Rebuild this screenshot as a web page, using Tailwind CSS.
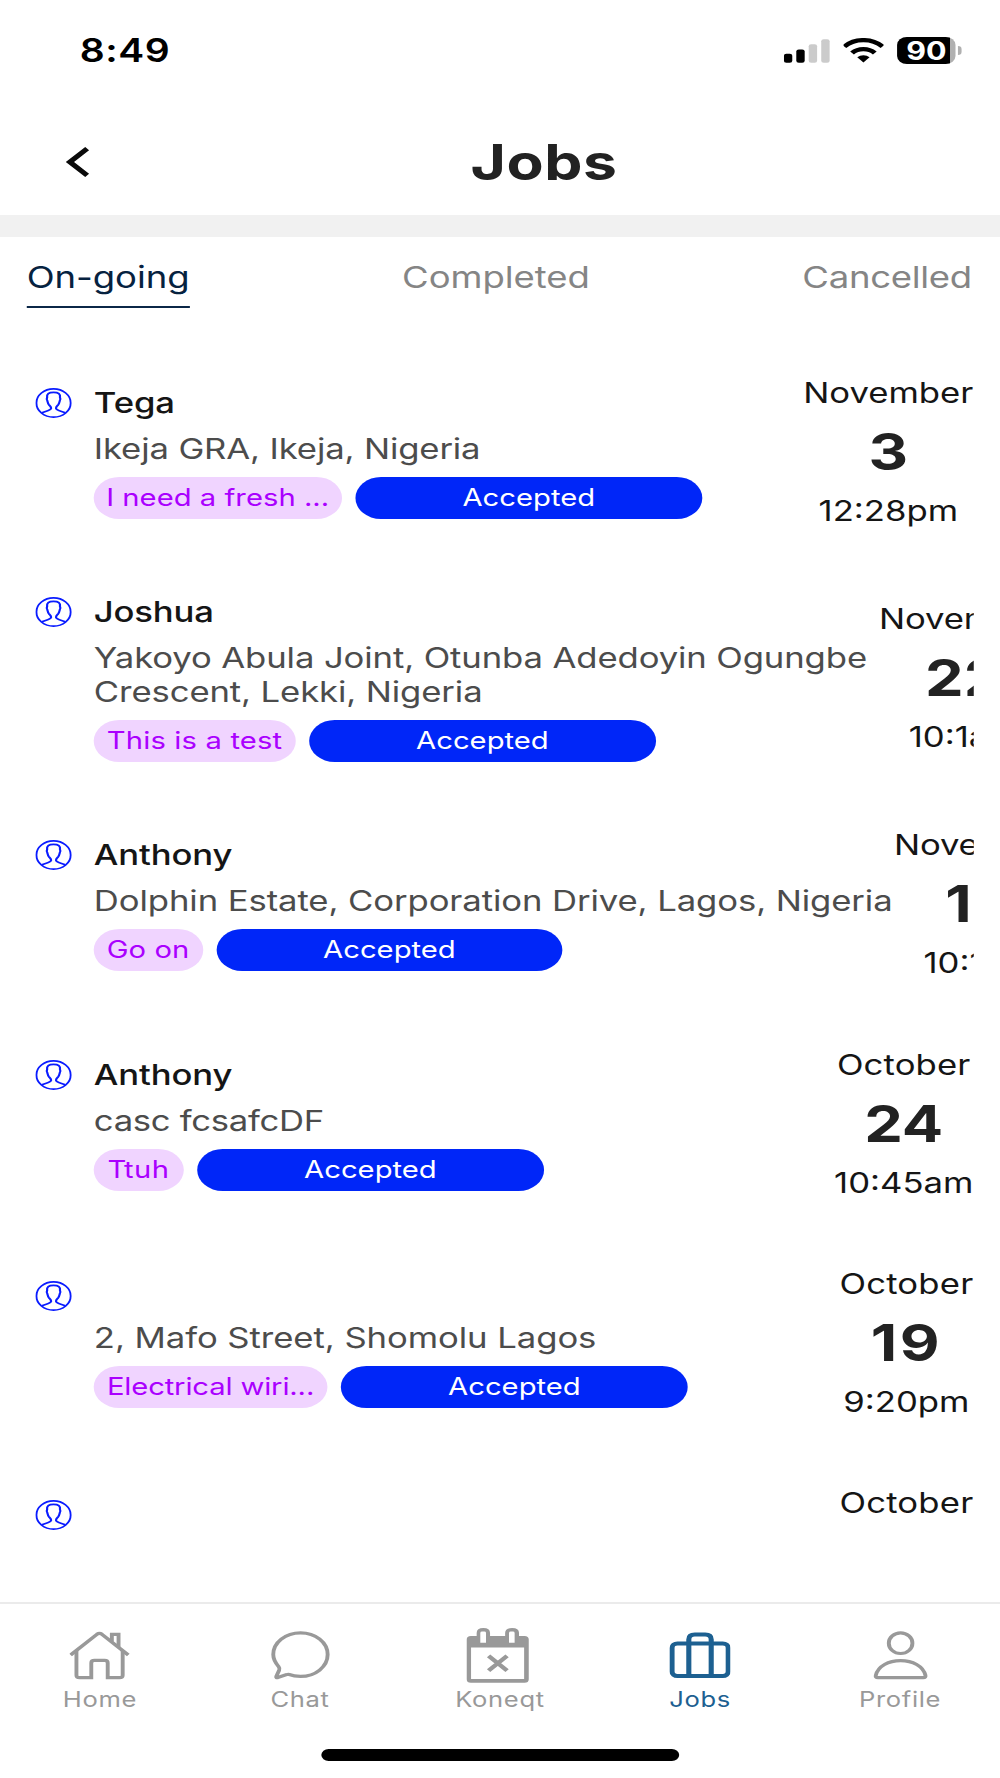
<!DOCTYPE html>
<html lang="en">
<head>
<meta charset="utf-8">
<meta name="viewport" content="width=device-width, initial-scale=1">
<title>Jobs</title>
<script src="https://cdn.jsdelivr.net/npm/@tailwindcss/browser@4"></script>
</head>
<body class="bg-white overflow-hidden font-['Inter',sans-serif]">
<svg class="hidden" aria-hidden="true">
  <symbol id="avatar" viewBox="0 0 30 30">
    <g fill="none" stroke="#0a1cff" stroke-width="1.6">
      <circle cx="15" cy="15" r="14.1"/>
      <path stroke-width="1.8" d="M5.4 24.9C8.6 23.2 13 22.2 13 20.2C13 18.6 12.2 18 11.2 16.8C10.4 15.7 10.2 14.4 9.9 12.8C9.2 11.6 9.2 10.6 9.7 9.6C9.2 5.8 11 4.3 15 4.3C19 4.3 20.8 5.8 20.3 9.6C20.8 10.6 20.8 11.6 20.1 12.8C19.8 14.4 19.6 15.7 18.8 16.8C17.8 18 17 18.6 17 20.2C17 22.2 21.4 23.2 24.6 24.9"/>
    </g>
  </symbol>
</svg>

<!-- The screen is 821.5 units wide and stretched to the window's 1000px -->
<div class="w-[821.6px] h-[1778px] flex flex-col origin-top-left scale-x-[1.2172] bg-white overflow-hidden">

  <!-- Status bar -->
  <div class="h-[101px] shrink-0 flex items-center justify-between pl-[65.5px] pr-[31.2px] text-black">
    <div class="text-[32px] font-semibold tracking-[0.5px] leading-10">8:49</div>
    <div class="flex items-center">
      <svg class="w-[38px] h-6" viewBox="0 0 38 24">
        <rect x="0" y="14.8" width="6.9" height="8.9" rx="2"/>
        <rect x="10.2" y="10.5" width="6.9" height="13.2" rx="2"/>
        <rect x="20.4" y="5.2" width="6.9" height="18.5" rx="2" fill="#cbcbcb"/>
        <rect x="30.7" y="0.3" width="6.9" height="23.4" rx="2" fill="#cbcbcb"/>
      </svg>
      <svg class="w-[33px] h-[25px] ml-[11px]" viewBox="0 0 33 25">
        <g fill="none" stroke="#000" stroke-width="4.3">
          <path d="M.7 8.6A22.15 22.15 0 0 1 32 8.6"/>
          <path d="M7 15A13.15 13.15 0 0 1 25.7 15"/>
        </g>
        <path d="M16.35 24.5L11.3 19.3A7.3 7.3 0 0 1 21.4 19.3Z"/>
      </svg>
      <div class="ml-[11px] flex items-center">
        <div class="w-[48.5px] h-[26.5px] rounded-[8px] bg-[linear-gradient(to_right,#000_43.2px,#b0b0b0_43.2px)] text-center text-white text-[25px] font-bold leading-[28px]">90</div>
        <div class="ml-[2px] w-[3px] h-[9px] rounded-r-full bg-[#b0b0b0]"></div>
      </div>
    </div>
  </div>

  <!-- Header -->
  <div class="h-[114px] shrink-0 pt-2 pl-[54px] flex items-center">
    <svg class="w-[20px] h-8" viewBox="0 0 20 32" fill="none" stroke="#0a0a0a" stroke-width="4.6">
      <path d="M17.6 2.6L3.4 16L17.6 29.4"/>
    </svg>
    <h1 class="ml-[312.5px] text-[49.8px] leading-[60px] font-bold tracking-[0.5px] text-[#222]">Jobs</h1>
  </div>
  <div class="h-[22px] shrink-0 bg-[#f1f1f1]"></div>

  <!-- Tabs -->
  <div class="ml-[21.9px] mr-[23.2px] pt-[22px] shrink-0 flex justify-between text-[30px] leading-9 tracking-[-0.05px] text-[#858585]">
    <div class="pb-[11px] border-b-[2.5px] border-[#0b2747] tracking-[-0.05px] text-[#06223f]">On-going</div>
    <div>Completed</div>
    <div class="tracking-[-0.25px]">Cancelled</div>
  </div>

  <!-- Job list -->
  <div class="mx-[21.9px] h-[1250px] shrink-0 pt-[66.8px] overflow-hidden flex flex-col gap-[65.25px] text-[28.5px] leading-9 text-[#151515]">

    <div class="flex items-center shrink-0">
      <div class="flex gap-[17.7px]">
        <svg class="w-[30px] h-[30px] ml-[7px] mt-[3px] shrink-0"><use href="#avatar"/></svg>
        <div>
          <div class="pl-[0.5px] font-medium tracking-[-0.1px]">Tega</div>
          <div class="mt-[11px] pl-[0.5px] leading-[34px] tracking-[-0.12px] text-[#4c4c4c]">Ikeja GRA, Ikeja, Nigeria</div>
          <div class="mt-[11px] flex gap-[11px] text-[24px] leading-[42px] text-center whitespace-nowrap">
            <div class="w-[204.6px] rounded-full bg-[#f0d4ff] tracking-[0.02px] text-[#aa00ff]">I need a fresh ...</div>
            <div class="w-[284.5px] rounded-full bg-[#0026f8] text-white">Accepted</div>
          </div>
        </div>
      </div>
      <div class="ml-auto text-center">
        <div>November</div>
        <div class="text-[50.4px] leading-[82px] font-bold text-[#222]">3</div>
        <div>12:28pm</div>
      </div>
    </div>

    <div class="flex items-center shrink-0">
      <div class="flex gap-[17.7px] shrink-0">
        <svg class="w-[30px] h-[30px] ml-[7px] mt-[3px] shrink-0"><use href="#avatar"/></svg>
        <div class="w-[645.6px]">
          <div class="pl-[0.5px] font-medium tracking-[-0.15px]">Joshua</div>
          <div class="mt-[11px] pl-[0.5px] leading-[34px] tracking-[-0.1px] text-[#4c4c4c] whitespace-nowrap">Yakoyo Abula Joint, Otunba Adedoyin Ogungbe<br>Crescent, Lekki, Nigeria</div>
          <div class="mt-[11px] flex gap-[11px] text-[24px] leading-[42px] text-center whitespace-nowrap">
            <div class="w-[166.5px] rounded-full bg-[#f0d4ff] tracking-[0.12px] text-[#aa00ff]">This is a test</div>
            <div class="w-[284.5px] rounded-full bg-[#0026f8] text-white">Accepted</div>
          </div>
        </div>
      </div>
      <div class="text-center">
        <div class="tracking-[-0.1px]">November</div>
        <div class="text-[50.4px] leading-[82px] font-bold text-[#222]">22</div>
        <div>10:1am</div>
      </div>
    </div>

    <div class="flex items-center shrink-0">
      <div class="flex gap-[17.7px] shrink-0">
        <svg class="w-[30px] h-[30px] ml-[7px] mt-[3px] shrink-0"><use href="#avatar"/></svg>
        <div class="w-[657.8px]">
          <div class="pl-[0.5px] font-medium tracking-[-0.1px]">Anthony</div>
          <div class="mt-[11px] pl-[0.5px] leading-[34px] tracking-[-0.08px] text-[#4c4c4c] whitespace-nowrap">Dolphin Estate, Corporation Drive, Lagos, Nigeria</div>
          <div class="mt-[11px] flex gap-[11px] text-[24px] leading-[42px] text-center whitespace-nowrap">
            <div class="w-[90.1px] rounded-full bg-[#f0d4ff] tracking-[0.05px] text-[#aa00ff]">Go on</div>
            <div class="w-[284.5px] rounded-full bg-[#0026f8] text-white">Accepted</div>
          </div>
        </div>
      </div>
      <div class="text-center">
        <div class="tracking-[-0.1px]">November</div>
        <div class="text-[50.4px] leading-[82px] font-bold text-[#222]">19</div>
        <div>10:1am</div>
      </div>
    </div>

    <div class="flex items-center shrink-0">
      <div class="flex gap-[17.7px]">
        <svg class="w-[30px] h-[30px] ml-[7px] mt-[3px] shrink-0"><use href="#avatar"/></svg>
        <div>
          <div class="pl-[0.5px] font-medium tracking-[-0.1px]">Anthony</div>
          <div class="mt-[11px] pl-[0.5px] leading-[34px] tracking-[-0.25px] text-[#4c4c4c]">casc fcsafcDF</div>
          <div class="mt-[11px] flex gap-[11px] text-[24px] leading-[42px] text-center whitespace-nowrap">
            <div class="w-[74.5px] rounded-full bg-[#f0d4ff] tracking-[0.4px] text-[#aa00ff]">Ttuh</div>
            <div class="w-[284.5px] rounded-full bg-[#0026f8] text-white">Accepted</div>
          </div>
        </div>
      </div>
      <div class="ml-auto text-center">
        <div class="tracking-[0.1px]">October</div>
        <div class="text-[50.4px] leading-[82px] font-bold text-[#222]">24</div>
        <div>10:45am</div>
      </div>
    </div>

    <div class="flex items-center shrink-0">
      <div class="flex gap-[17.7px]">
        <svg class="w-[30px] h-[30px] ml-[7px] mt-[3px] shrink-0"><use href="#avatar"/></svg>
        <div>
          <div class="h-[31.5px]"></div>
          <div class="mt-[11px] pl-[0.5px] leading-[34px] tracking-[-0.06px] text-[#4c4c4c]">2, Mafo Street, Shomolu Lagos</div>
          <div class="mt-[11px] flex gap-[11px] text-[24px] leading-[42px] text-center whitespace-nowrap">
            <div class="w-[192.8px] rounded-full bg-[#f0d4ff] tracking-[-0.12px] text-[#aa00ff]">Electrical wiri...</div>
            <div class="w-[284.5px] rounded-full bg-[#0026f8] text-white">Accepted</div>
          </div>
        </div>
      </div>
      <div class="ml-auto text-center">
        <div class="tracking-[0.15px]">October</div>
        <div class="text-[50.4px] leading-[82px] font-bold tracking-[2px] text-[#222]">19</div>
        <div>9:20pm</div>
      </div>
    </div>

    <div class="flex shrink-0">
      <svg class="w-[30px] h-[30px] ml-[7px] mt-[14.5px] shrink-0"><use href="#avatar"/></svg>
      <div class="ml-auto tracking-[0.15px]">October</div>
    </div>
  </div>

  <!-- Bottom navigation -->
  <div class="mt-auto h-[176px] shrink-0 border-t-2 border-[#ebebeb] flex flex-col">
    <div class="pt-6 grid grid-cols-5 justify-items-center text-[21px] leading-[26px] tracking-[0.55px] text-[#999]">
      <div class="flex flex-col items-center gap-[3.6px]">
        <svg class="w-[49.4px] h-[55px]" viewBox="0 -3.4 49.4 55" fill="none" stroke="currentColor" stroke-width="3.2">
          <path d="M1 23.6L22.6 2.9Q24.7 1 26.8 2.9L48.4 23.6"/>
          <path d="M5.8 19V43.8Q5.8 46.3 8.3 46.3H18V31.5Q18 28.9 20.6 28.9H29Q31.5 28.9 31.5 31.5V46.3H41.3Q43.8 46.3 43.8 43.8V19"/>
          <path d="M34.9 10V2.9H40.4V15.5"/>
        </svg>
        <span>Home</span>
      </div>
      <div class="flex flex-col items-center gap-[3.6px]">
        <svg class="w-[47.7px] h-[55px] overflow-visible" viewBox="0 -3.4 47.7 55" fill="none" stroke="currentColor" stroke-width="3.2" stroke-linejoin="round">
          <path d="M14.6 43.1C17.3 44.4 20.4 45 23.9 45C36.2 45 46.2 35.3 46.2 23.2S36.2 1.4 23.9 1.4S1.5 11.1 1.5 23.2C1.5 28.5 3.3 31.6 5.9 35.2C6.7 36.4 6.8 37.6 6.3 39L4 45C3.6 46 4.2 46.5 5.2 46.2L12.6 43.2Q13.7 42.7 14.6 43.1Z"/>
        </svg>
        <span>Chat</span>
      </div>
      <div class="flex flex-col items-center gap-[3.6px]">
        <svg class="w-[54.6px] h-[55px]" viewBox="-0.4 0 54.6 55" fill="currentColor">
          <path fill-rule="evenodd" d="M3.5 8H8.2V5Q8.2 0 13.7 0T19.2 5V8H31.6V5Q31.6 0 37.3 0T43 5V8H47.5Q51 8 51 11.5V51.2Q51 54.7 47.5 54.7H3.5Q0 54.7 0 51.2V11.5Q0 8 3.5 8ZM3.6 19.6V51H47.2V19.6ZM11.2 5V14.7H15.9V5Q15.9 3.6 14.5 3.6H12.6Q11.2 3.6 11.2 5ZM34.8 5V14.7H39.4V5Q39.4 3.6 38 3.6H36.2Q34.8 3.6 34.8 5Z"/>
          <path fill="none" stroke="currentColor" stroke-width="3.9" d="M18 27.8L33.2 42.6M33.2 27.8L18 42.6"/>
        </svg>
        <span>Koneqt</span>
      </div>
      <div class="flex flex-col items-center gap-[3.6px] text-[#1d6091]">
        <svg class="w-[50.4px] h-[55px]" viewBox="0 -4.4 50.4 55" fill="none" stroke="currentColor" stroke-width="4.2">
          <rect x="2.1" y="11.1" width="46.2" height="32.5" rx="4.5"/>
          <path d="M15.9 43.6V7Q15.9 2.1 20.8 2.1H29.4Q34.3 2.1 34.3 7V43.6"/>
        </svg>
        <span>Jobs</span>
      </div>
      <div class="flex flex-col items-center gap-[3.6px]">
        <svg class="w-[44px] h-[55px] overflow-visible" viewBox="-0.9 -3.4 44 55" fill="none" stroke="currentColor" stroke-width="3.2">
          <ellipse cx="22" cy="11.8" rx="9.7" ry="10.3"/>
          <path d="M3.3 46.3Q1.2 46.3 1.6 44C3.4 34.6 12.2 29.2 22 29.2S40.6 34.6 42.4 44Q42.8 46.3 40.7 46.3Z"/>
        </svg>
        <span>Profile</span>
      </div>
    </div>
    <div class="mx-auto mt-[36.7px] w-[293.8px] h-[11.4px] rounded-full bg-black"></div>
  </div>
</div>
</body>
</html>
